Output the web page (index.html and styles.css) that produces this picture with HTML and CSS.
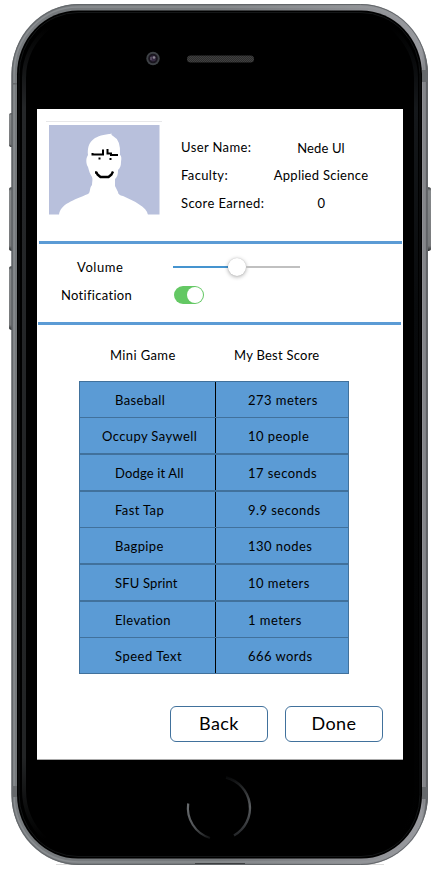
FILE: index.html
```html
<!DOCTYPE html>
<html lang="en">
<head>
<meta charset="utf-8">
<title>User Profile</title>
<link rel="stylesheet" href="styles.css">
</head>
<body>
<main class="phone">
  <svg class="shell" viewBox="0 0 436 872" aria-hidden="true">
    <defs>
      <linearGradient id="rim" x1="0" x2="1" y1="0" y2="0">
        <stop offset="0" stop-color="#55595c"/><stop offset=".006" stop-color="#777b7e"/><stop offset=".5" stop-color="#777a7d"/><stop offset=".985" stop-color="#98999e"/><stop offset="1" stop-color="#505155"/>
      </linearGradient>
      <linearGradient id="key" x1="0" x2="0" y1="0" y2="1">
        <stop offset="0" stop-color="#333638"/><stop offset=".06" stop-color="#85888a"/><stop offset=".92" stop-color="#77797b"/><stop offset="1" stop-color="#292b2d"/>
      </linearGradient>
      <linearGradient id="glint" x1="0" x2="0" y1="0" y2="1">
        <stop offset="0" stop-color="#000"/><stop offset=".1" stop-color="#242628"/><stop offset=".9" stop-color="#222425"/><stop offset="1" stop-color="#000"/>
      </linearGradient>
      <linearGradient id="glintRight" x1="0" x2="0" y1="0" y2="1">
        <stop offset="0" stop-color="#000"/><stop offset=".1" stop-color="#15181b"/><stop offset=".35" stop-color="#080a0c"/><stop offset="1" stop-color="#000"/>
      </linearGradient>
      <linearGradient id="ringLeft" x1="0" x2="1" y1="0" y2="1">
        <stop offset="0" stop-color="#686b6e"/><stop offset=".5" stop-color="#505356"/><stop offset="1" stop-color="#101112"/>
      </linearGradient>
      <linearGradient id="ringRight" x1="0" x2="0" y1="0" y2="1">
        <stop offset="0" stop-color="#08090a"/><stop offset=".5" stop-color="#5b5e61"/><stop offset="1" stop-color="#242629"/>
      </linearGradient>
      <pattern id="mesh" width="2" height="2" patternUnits="userSpaceOnUse"><path fill="#2c2c2c" d="M0 0h2v2H0z"/><path fill="#404040" d="M0 0h1v1H0zM1 1h1v1H1z"/></pattern>
    </defs>
    <path fill="url(#key)" d="M9 115q0-2 3-2v34q-3 0-3-2z"/>
    <path fill="url(#key)" d="M9 189q0-2 4-2v64q-4 0-4-2z"/>
    <path fill="url(#key)" d="M9 268q0-2 4-2v64q-4 0-4-2z"/>
    <path fill="url(#key)" d="M427 187q4 0 4 2v60q0 2-4 2z"/>
    <path d="M56 864.5h30M360 864.5h24" stroke="#ddd"/>
    <rect x="11.5" y="4" width="416.5" height="861" rx="67" ry="70" fill="url(#rim)"/>
    <rect x="12" y="4.5" width="415.5" height="860" rx="67" ry="70" fill="none" stroke="#63676a"/>
    <rect x="14" y="7" width="411" height="855" rx="64" ry="67" fill="none" stroke="#96999c" stroke-width="1.5" opacity=".6"/>
    <path fill="#66696c" d="M12 83h5v1.5h-5zM12 786h5.5v11H12zM422 70h5.5v12H422zM422 787h5.5v12H422z"/>
    <path d="M195 863.5h50" stroke="#3e4042"/>
    <rect x="17" y="10.5" width="405" height="848" rx="61" ry="64" fill="#000"/>
    <rect x="19" y="12.5" width="401" height="844" rx="59" ry="62" fill="none" stroke="#181a1c" stroke-width=".8"/>
    <path fill="none" stroke="url(#glint)" stroke-width="4" d="M49 27Q24 48 24 78V790q0 29 21 49"/>
    <path fill="none" stroke="url(#glintRight)" stroke-width="4" d="M391 27Q416 49 416 78V790q0 28-20 48"/>
    <circle cx="153" cy="58.5" r="6.7" fill="#3d4145"/><circle cx="153" cy="58.5" r="4.8" fill="#19151e"/><circle cx="153" cy="58.5" r="3" fill="#352a41"/><circle cx="154" cy="57.5" r="1.3" fill="#8c8692"/><path d="M151 60v-3" stroke="#73697b"/>
    <rect x="187" y="55.5" width="67" height="7" rx="3.5" fill="url(#mesh)"/>
    <path fill="none" stroke="url(#ringLeft)" stroke-width="2.2" d="M188.200 803.500A31.500 31.500 0 0 0 210 838"/>
    <path fill="none" stroke="url(#ringRight)" stroke-width="2.4" d="M226 777.500A31.500 31.500 0 0 1 234 835.500"/>
  </svg>

  <section class="screen">
    <header class="profile">
      <svg class="avatar" viewBox="0 0 116 98" role="img" aria-label="Avatar">
        <path d="M0 .5h116" stroke="#e7e7e9"/>
        <path fill="#b8c0dc" d="M3 4h110.500v89.500H3z"/>
        <path fill="#fff" d="M13 94c1-11 15-15 29-21 3-2 1-6 4-9 0-3 1-6 0-8-2-3-3-6-4-10-2-3-2-8-1-10l1-2c-1-13 5-19 21-21q3 0 2-2 0 3 2 4 8 4 7 19 2 1 1 7c0 4-1 6-3 8 0 5-1 7-3 9v7l3 6q0 3 5 4c11 5 24 11 25 19z"/>
        <path fill="none" stroke="#000" stroke-width="2" d="M46.500 32v1.500H57V28.500M61.500 28v4.500h3.500v1.500h7"/>
        <path fill="#000" d="M52.500 36.500h2v2h-2zM63.500 37h2v2h-2z"/>
        <path fill="none" stroke="#000" stroke-width="2.400" stroke-linejoin="round" d="M49 51.500h1.500l1 2 3 2.500h8l3-2.500 1.500-3"/>
      </svg>
      <dl class="facts">
        <dt>User Name:</dt><dd class="name">Nede Ul</dd>
        <dt>Faculty:</dt><dd class="faculty">Applied Science</dd>
        <dt>Score Earned:</dt><dd class="total">0</dd>
      </dl>
    </header>

    <section class="settings">
      <span class="label volume">Volume</span>
      <div class="slider"><i class="filled"></i><i class="thumb"></i><i class="rest"></i></div>
      <span class="label notification">Notification</span>
      <div class="switch"><i class="knob"></i></div>
    </section>

    <section class="scores">
      <div class="heads"><span>Mini Game</span><span class="best-head">My Best Score</span></div>
      <div class="board">
        <div class="row"><span class="game">Baseball</span><span class="best">273 meters</span></div>
        <div class="row thick"><span class="game wide">Occupy Saywell</span><span class="best">10 people</span></div>
        <div class="row thick"><span class="game snug">Dodge it All</span><span class="best">17 seconds</span></div>
        <div class="row"><span class="game">Fast Tap</span><span class="best">9.9 seconds</span></div>
        <div class="row thick"><span class="game">Bagpipe</span><span class="best">130 nodes</span></div>
        <div class="row thick"><span class="game snug">SFU Sprint</span><span class="best">10 meters</span></div>
        <div class="row"><span class="game">Elevation</span><span class="best">1 meters</span></div>
        <div class="row last"><span class="game loose">Speed Text</span><span class="best">666 words</span></div>
      </div>
    </section>

    <footer class="actions"><button>Back</button><button>Done</button></footer>
  </section>
</main>
</body>
</html>
```

FILE: styles.css
```css
* { box-sizing: border-box; }
body { margin: 0; background: #fff; overflow: hidden; }
.phone {
  position: relative;
  width: 436px;
  height: 872px;
  padding: 109px 33px 112px 37px;
  font: 13px/18px Lato, "Liberation Sans", sans-serif;
  letter-spacing: .38px;
  font-variant-ligatures: none;
  color: #000;
}
.shell { position: absolute; inset: 0; width: 436px; height: 872px; }
.screen {
  position: relative;
  display: flex;
  flex-direction: column;
  width: 366px;
  height: 651px;
  background: #fff;
  border-bottom: 1px solid #aaa;
}
.profile {
  display: flex;
  height: 135px;
  margin: 0 1px 0 2px;
  padding: 12px 0 0 7px;
  border-bottom: 3px solid #5b9bd5;
}
.avatar { width: 116px; height: 98px; flex: none; }
.facts {
  display: grid;
  grid-template-columns: 80px 120px;
  grid-auto-rows: 28px;
  margin: 17px 0 0 19px;
}
.facts dt, .facts dd { margin: 0; white-space: nowrap; }
.facts dd { text-align: center; }
.facts .name { padding-top: 1px; letter-spacing: .15px; }
.facts .faculty { letter-spacing: .28px; }
.facts .total { padding-left: 1px; }
.settings {
  display: grid;
  grid-template-columns: 135px 127px;
  grid-template-rows: 28px 28px;
  align-items: center;
  height: 81px;
  margin: 0 2px 0 1px;
  padding-top: 9px;
  border-bottom: 3px solid #5b9bd5;
}
.label { justify-self: start; }
.volume { margin-left: 39px; letter-spacing: .55px; }
.notification { margin-left: 23px; letter-spacing: .3px; }
.slider { display: flex; align-items: center; }
.filled, .rest { flex: 1; height: 2px; background: #c0c0c0; }
.filled { background: #4594cf; }
.thumb {
  width: 18px;
  height: 18px;
  border-radius: 50%;
  background: #fff;
  box-shadow: 0 1px 4px #0005, 0 0 1px #0003;
}
.switch {
  display: flex;
  justify-content: flex-end;
  width: 30px;
  height: 18px;
  margin-left: 1px;
  padding: 1px;
  border-radius: 9px;
  background: #64c864;
}
.knob { width: 16px; height: 16px; border-radius: 50%; background: #fff; }
.heads {
  display: grid;
  grid-template-columns: 124px 1fr;
  padding: 21px 0 0 73px;
  height: 56px;
}
.best-head { letter-spacing: .25px; }
.board {
  width: 270px;
  margin-left: 42px;
  border: 1px solid #41719c;
  background: #5b9bd5;
}
.row {
  display: grid;
  grid-template-columns: 136px 1fr;
  height: 36px;
  border-bottom: 1px solid #41719c;
}
.row.thick { height: 37px; border-bottom-width: 2px; }
.row.last { height: 35px; border: 0; }
.game, .best { display: flex; align-items: center; white-space: nowrap; }
.game { padding: 1px 0 0 35px; border-right: 1px solid #000; }
.game.wide { padding-left: 22px; }
.game.snug { letter-spacing: .15px; }
.game.loose { letter-spacing: .5px; }
.best { padding: 1px 0 0 32px; letter-spacing: .45px; }
.actions { display: flex; gap: 17px; margin: 32px 0 0 133px; }
.actions button {
  width: 98px;
  height: 36px;
  padding: 0 0 3px;
  border: 1px solid #41719c;
  border-radius: 6px;
  background: #fff;
  color: #000;
  font: 18px/24px Lato, "Liberation Sans", sans-serif;
  letter-spacing: .4px;
}
```
